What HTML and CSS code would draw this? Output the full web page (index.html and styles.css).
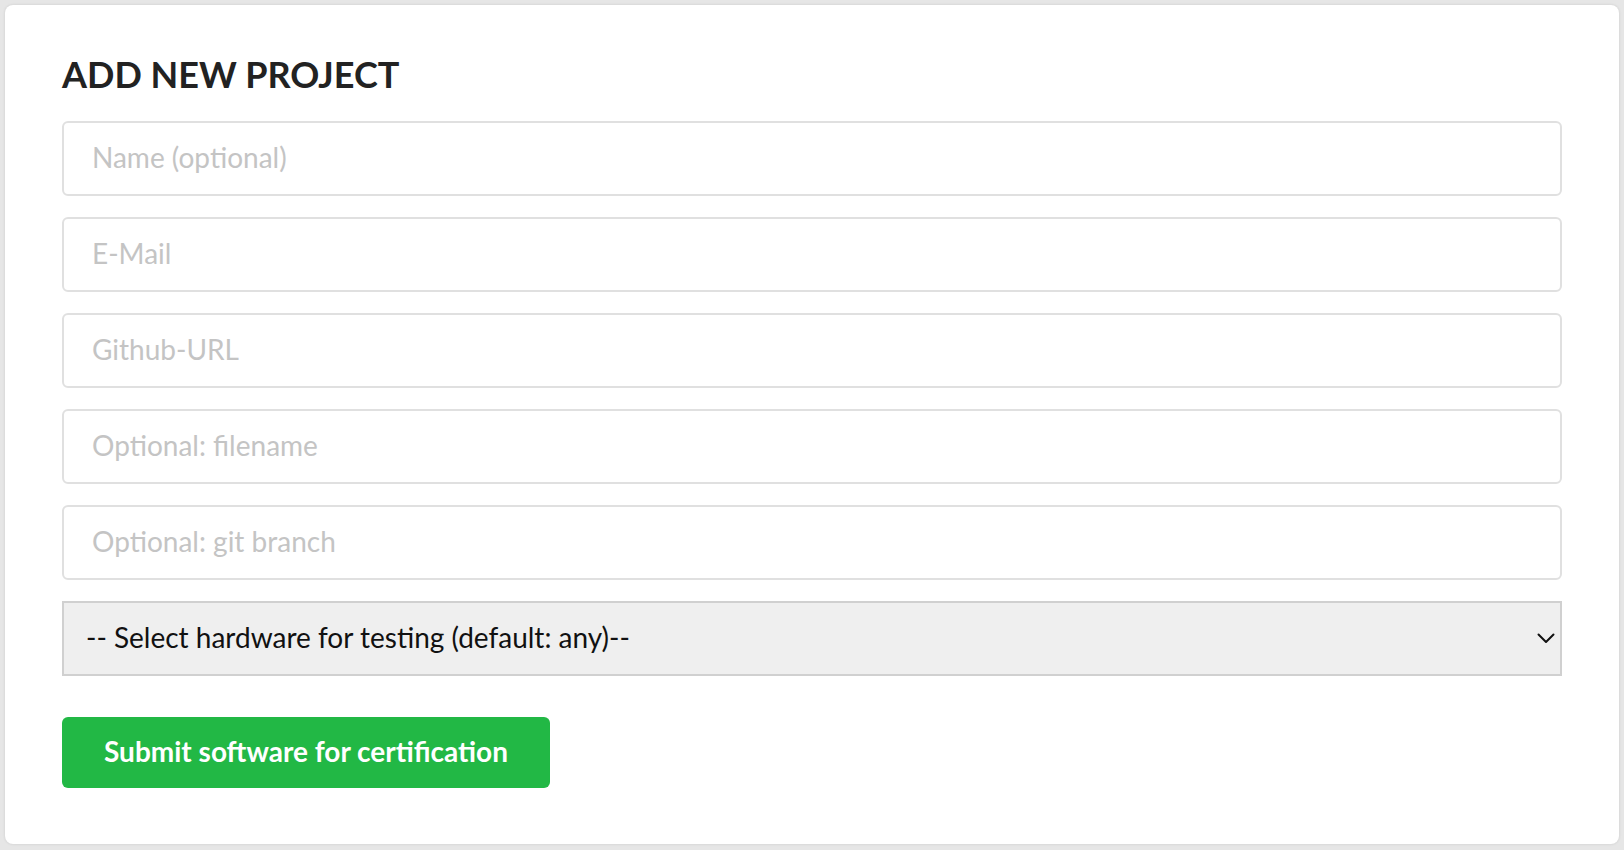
FILE: index.html
```html
<!DOCTYPE html>
<html lang="en">
<head>
<meta charset="utf-8">
<title>Add new project</title>
<link rel="stylesheet" href="styles.css">
</head>
<body>
<main class="card">
  <h2 class="title">ADD NEW PROJECT</h2>
  <form class="form">
    <input class="field" type="text" placeholder="Name (optional)">
    <input class="field" type="email" placeholder="E-Mail">
    <input class="field" type="text" placeholder="Github-URL">
    <input class="field" type="text" placeholder="Optional: filename">
    <input class="field" type="text" placeholder="Optional: git branch">
    <div class="select-wrap">
      <select class="select">
        <option>-- Select hardware for testing (default: any)--</option>
      </select>
      <svg class="chevron" width="18" height="11" viewBox="0 0 18 11" aria-hidden="true">
        <path d="M1.5 1.5 L9 9 L16.5 1.5" fill="none" stroke="#111" stroke-width="2" stroke-linecap="round" stroke-linejoin="round"/>
      </svg>
    </div>
    <button class="submit" type="button">Submit software for certification</button>
  </form>
</main>
</body>
</html>
```

FILE: styles.css
```css
* { box-sizing: border-box; }
html, body { height: 100%; }
body {
  margin: 0;
  padding: 5px 5px 6px 5px;
  background: #e6e6e6;
  font-family: Lato, "Open Sans", sans-serif;
}
.card {
  background: #fff;
  border-radius: 8px;
  box-shadow: 0 0 3px rgba(0,0,0,0.12);
  padding: 47px 57px 57px 57px;
  height: 839px;
}
.title {
  margin: 0 0 25px 0;
  font-size: 36px;
  line-height: 44px;
  font-weight: 700;
  color: #222;
}
.form {
  display: flex;
  flex-direction: column;
  align-items: flex-start;
}
.field {
  width: 100%;
  height: 75px;
  margin: 0 0 21px 0;
  padding: 0 28px 4px 28px;
  border: 2px solid #e0e0e0;
  border-radius: 6px;
  font-family: inherit;
  font-size: 28px;
  color: #333;
  background: #fff;
  outline: none;
}
.field::placeholder { color: #c4c4c4; }
.select-wrap {
  position: relative;
  width: 100%;
  margin: 0 0 41px 0;
}
.select {
  display: block;
  width: 100%;
  height: 75px;
  padding: 0 40px 4px 22px;
  border: 2px solid #d0d0d0;
  border-radius: 0;
  background: #efefef;
  font-family: inherit;
  font-size: 28px;
  color: #111;
  -webkit-appearance: none;
  appearance: none;
}
.chevron {
  position: absolute;
  right: 7px;
  top: 32px;
  pointer-events: none;
}
.submit {
  height: 71px;
  padding: 0 42px 4px 42px;
  border: none;
  border-radius: 6px;
  background: #22b845;
  color: #fff;
  font-family: inherit;
  font-weight: 700;
  font-size: 28px;
  cursor: pointer;
}
```
